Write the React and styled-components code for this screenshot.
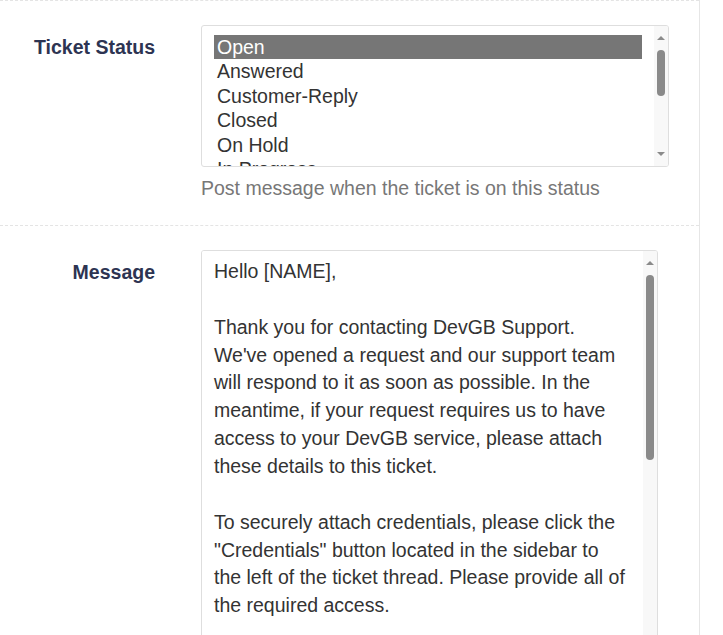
import React, { useLayoutEffect, useRef, useState } from "react";
import styled, { createGlobalStyle } from "styled-components";

const GlobalStyle = createGlobalStyle`
  html, body {
    margin: 0;
    padding: 0;
    background: #fff;
    font-family: "Liberation Sans", Arial, sans-serif;
  }
`;

const statuses = [
  "Open",
  "Answered",
  "Customer-Reply",
  "Closed",
  "On Hold",
  "In Progress",
  "Awaiting Reply",
  "Escalated",
  "Pending",
  "Resolved",
  "Scheduled",
];

const defaultMessage = `Hello [NAME],

Thank you for contacting DevGB Support.
We've opened a request and our support team will respond to it as soon as possible. In the meantime, if your request requires us to have access to your DevGB service, please attach these details to this ticket.

To securely attach credentials, please click the "Credentials" button located in the sidebar to the left of the ticket thread. Please provide all of the required access.

If you need to add more information, simply reply to this email and it will be added to your ticket.

Ticket ID: #[TICKETID]
Subject: [SUBJECT]
Status: [STATUS]

You can view the ticket at any time at [TICKETLINK]

Kind regards,
DevGB Support Team`;

const ARROW = 24;

//----------------------------------------------------------------
const Panel = styled.div`
  width: 699px;
  min-height: 100vh;
  border-right: 1px solid #e6e6e6;
`;

const FormRow = styled.div`
  display: grid;
  grid-template-columns: 155px 468px;
  column-gap: 46px;
  align-items: start;
  border-top: 1px dashed #e4e4e4;
  padding: 24px 0 23px;
`;

const Label = styled.label`
  text-align: right;
  font-size: 19.5px;
  font-weight: 700;
  color: #2d3452;
  line-height: ${(p) => (p.$tall ? "28px" : "24.4px")};
  padding-top: ${(p) => (p.$tall ? "8px" : "10px")};
`;

const Field = styled.div`
  display: flex;
  flex-direction: column;
`;

//----------------------------------------------------------------
// box with a drawn scrollbar on its right side
const ScrollFrame = styled.div`
  display: flex;
  box-sizing: border-box;
  width: ${(p) => p.$width}px;
  height: ${(p) => p.$height}px;
  border: 1px solid #dedede;
  border-radius: 3px;
  overflow: hidden;
  background: #fff;
`;

const Rail = styled.div`
  flex: 0 0 14px;
  display: flex;
  flex-direction: column;
  background: #f8f8f8;
`;

const ArrowButton = styled.div`
  flex: 0 0 ${ARROW}px;
  display: flex;
  align-items: center;
  justify-content: center;
  &::before {
    content: "";
    width: 0;
    height: 0;
    border-left: 4px solid transparent;
    border-right: 4px solid transparent;
    ${(p) =>
      p.$down
        ? "border-top: 4px solid #8a8a8a;"
        : "border-bottom: 4px solid #8a8a8a;"}
  }
`;

const Track = styled.div`
  flex: 1;
  position: relative;
`;

const Thumb = styled.div`
  position: absolute;
  left: 3px;
  right: 3px;
  border-radius: 4px;
  background: #8a8a8a;
`;

const StatusList = styled.ul`
  flex: 1;
  list-style: none;
  margin: 0;
  padding: 9px 12px;
  overflow-y: auto;
  scrollbar-width: none;
  &::-webkit-scrollbar {
    display: none;
  }
`;

const Option = styled.li`
  font-size: 19.5px;
  line-height: 24.4px;
  padding-left: 3px;
  white-space: nowrap;
  cursor: default;
  color: ${(p) => (p.$selected ? "#fff" : "#333")};
  background: ${(p) => (p.$selected ? "#767676" : "transparent")};
`;

const HelpText = styled.span`
  margin-top: 7px;
  font-size: 19.5px;
  line-height: 28px;
  color: #777;
`;

const MessageBox = styled.textarea`
  flex: 1;
  box-sizing: border-box;
  margin: 0;
  padding: 7px 12px;
  border: none;
  font-family: "Liberation Sans", Arial, sans-serif;
  font-size: 19.5px;
  line-height: 27.86px;
  color: #333;
  resize: none;
  outline: none;
  overflow-y: auto;
  scrollbar-width: none;
  &::-webkit-scrollbar {
    display: none;
  }
`;

// keeps the drawn thumb in step with the scrolled element
const useScrollThumb = () => {
  const ref = useRef(null);
  const [thumb, setThumb] = useState({ top: 0, height: 0 });

  const update = () => {
    const el = ref.current;
    if (!el) return;
    const track = el.clientHeight + 2 - ARROW * 2;
    const ratio = el.clientHeight / el.scrollHeight;
    const height = Math.max(20, track * ratio);
    const max = el.scrollHeight - el.clientHeight;
    const top = max > 0 ? (el.scrollTop / max) * (track - height) : 0;
    setThumb({ top, height });
  };

  useLayoutEffect(update, []);
  return [ref, thumb, update];
};

const ScrollBar = ({ thumb }) => (
  <Rail>
    <ArrowButton />
    <Track>
      <Thumb style={{ top: thumb.top, height: thumb.height }} />
    </Track>
    <ArrowButton $down />
  </Rail>
);

const App = () => {
  const [status, setStatus] = useState("Open");
  const [listRef, listThumb, onListScroll] = useScrollThumb();
  const [msgRef, msgThumb, onMsgScroll] = useScrollThumb();

  return (
    <>
      <GlobalStyle />
      <Panel>
        <FormRow>
          <Label>Ticket Status</Label>
          <Field>
            <ScrollFrame $width={468} $height={142}>
              <StatusList role="listbox" ref={listRef} onScroll={onListScroll}>
                {statuses.map((s) => (
                  <Option
                    key={s}
                    role="option"
                    $selected={s === status}
                    aria-selected={s === status}
                    onClick={() => setStatus(s)}
                  >
                    {s}
                  </Option>
                ))}
              </StatusList>
              <ScrollBar thumb={listThumb} />
            </ScrollFrame>
            <HelpText>Post message when the ticket is on this status</HelpText>
          </Field>
        </FormRow>
        <FormRow>
          <Label $tall>Message</Label>
          <Field>
            <ScrollFrame $width={457} $height={402}>
              <MessageBox
                ref={msgRef}
                onScroll={onMsgScroll}
                defaultValue={defaultMessage}
              />
              <ScrollBar thumb={msgThumb} />
            </ScrollFrame>
          </Field>
        </FormRow>
      </Panel>
    </>
  );
};

export default App;
